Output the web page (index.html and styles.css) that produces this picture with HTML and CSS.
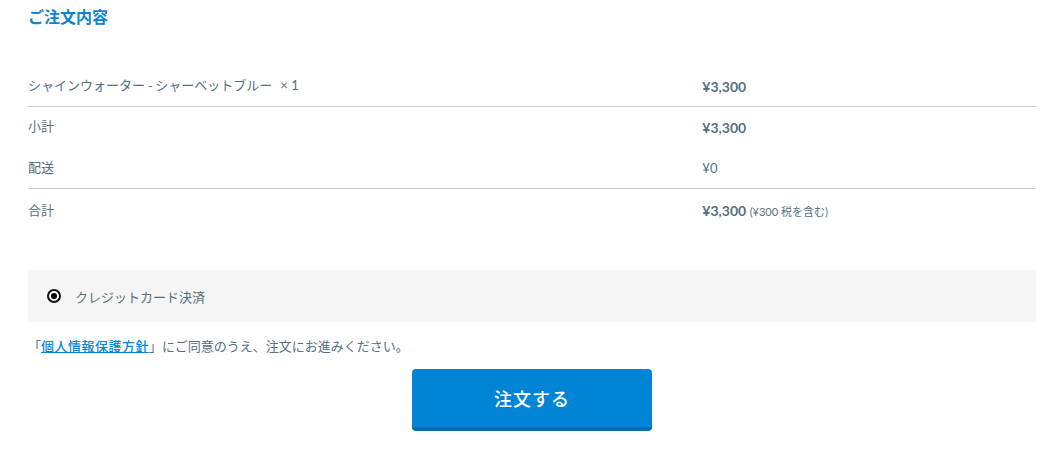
FILE: index.html
```html
<!DOCTYPE html>
<html lang="ja">
<head>
<meta charset="utf-8">
<title>ご注文内容</title>
<link rel="stylesheet" href="styles.css">
</head>
<body>
<div class="page">
  <h2 class="title">ご注文内容</h2>
  <table class="order">
    <tbody>
      <tr class="sep first">
        <td class="label">シャインウォーター - シャーベットブルー<span class="qty">× 1</span></td>
        <td class="price strong">¥3,300</td>
      </tr>
      <tr class="mid">
        <td class="label">小計</td>
        <td class="price strong">¥3,300</td>
      </tr>
      <tr class="sep ship">
        <td class="label">配送</td>
        <td class="price">¥0</td>
      </tr>
      <tr class="total">
        <td class="label">合計</td>
        <td class="price strong">¥3,300 <small class="tax">(¥300 税を含む)</small></td>
      </tr>
    </tbody>
  </table>

  <div class="payment">
    <span class="radio"><span class="dot"></span></span>
    <span class="pay-label">クレジットカード決済</span>
  </div>

  <p class="agree">「<a href="#" class="link">個人情報保護方針</a>」にご同意のうえ、注文にお進みください。</p>

  <div class="actions">
    <button class="submit" type="button">注文する</button>
  </div>
</div>
</body>
</html>
```

FILE: styles.css
```css
html, body {
  margin: 0;
  padding: 0;
  background: #ffffff;
}
body {
  font-family: Lato, "Noto Sans CJK JP", sans-serif;
  color: #55707f;
  font-size: 13px;
}
.page {
  padding: 4px 26px 0 28px;
}
.title {
  margin: 0;
  font-size: 16px;
  line-height: 24px;
  font-weight: 700;
  color: #0a84d6;
  font-family: "Noto Sans CJK JP", sans-serif;
}
.order {
  width: 100%;
  border-collapse: collapse;
  margin-top: 37px;
}
.order td {
  line-height: 17px;
  font-size: 13px;
  vertical-align: top;
}
.order td.label {
  width: 66.9%;
  padding: 11px 0 13px 0;
  font-family: "Noto Sans CJK JP", sans-serif;
}
.order td.price {
  padding: 13px 0 11px 0;
}
.qty {
  font-family: Lato, sans-serif;
  margin-left: 8px;
  line-height: 1;
}
.order tr.sep td {
  border-bottom: 1px solid #cccccc;
}
.order tr.mid td.label {
  padding: 10px 0 13px 0;
}
.order tr.mid td.price {
  padding: 12px 0 11px 0;
}
.order tr.total td.label {
  padding: 12px 0 14px 0;
}
.order tr.total td.price {
  padding: 13px 0 11px 0;
}
.order td.strong,
.strong {
  font-weight: 700;
  font-size: 14px;
}
.price {
  font-family: Lato, "Noto Sans CJK JP", sans-serif;
}
.tax {
  font-size: 11px;
  font-weight: 400;
  line-height: 1;
  font-family: Lato, "Noto Sans CJK JP", sans-serif;
}
.payment {
  margin-top: 38px;
  height: 52px;
  background: #f5f5f5;
  border-radius: 4px;
  display: flex;
  align-items: center;
  padding-left: 19px;
  gap: 14px;
}
.radio {
  width: 10px;
  height: 10px;
  border: 2px solid #111111;
  border-radius: 50%;
  background: #ffffff;
  display: flex;
  align-items: center;
  justify-content: center;
}
.dot {
  width: 6px;
  height: 6px;
  border-radius: 50%;
  background: #000000;
}
.pay-label {
  font-family: "Noto Sans CJK JP", sans-serif;
  font-size: 13px;
}
.agree {
  margin: 14px 0 0 0;
  line-height: 20px;
  font-size: 13px;
  font-family: "Noto Sans CJK JP", sans-serif;
}
.link {
  color: #0a84d6;
  font-weight: 500;
  text-decoration: underline;
  letter-spacing: 0.5px;
}
.actions {
  display: flex;
  justify-content: center;
  margin-top: 13px;
}
.submit {
  width: 240px;
  height: 62px;
  background: #0084d6;
  color: #ffffff;
  border: none;
  border-bottom: 4px solid #006fb5;
  border-radius: 4px;
  font-family: "Noto Sans CJK JP", sans-serif;
  font-size: 18px;
  font-weight: 500;
  letter-spacing: 1px;
  padding: 0;
  cursor: pointer;
}
```
